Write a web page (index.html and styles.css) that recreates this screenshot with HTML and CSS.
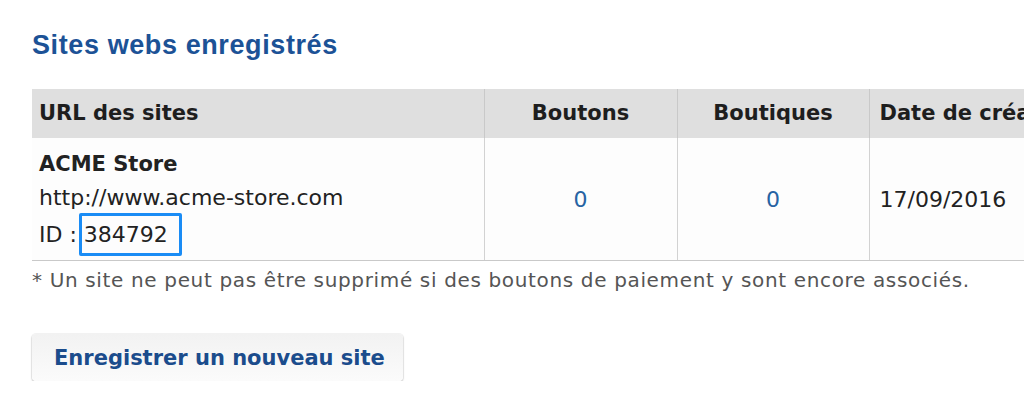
FILE: index.html
```html
<!DOCTYPE html>
<html lang="fr">
<head>
<meta charset="utf-8">
<title>Sites webs enregistrés</title>
<link rel="stylesheet" href="styles.css">
</head>
<body>
<div class="page">
  <h2 class="title">Sites webs enregistrés</h2>
  <table class="sites">
    <colgroup>
      <col class="c-url">
      <col class="c-btn">
      <col class="c-shop">
      <col class="c-date">
    </colgroup>
    <thead>
      <tr>
        <th class="h-url">URL des sites</th>
        <th class="h-num">Boutons</th>
        <th class="h-num">Boutiques</th>
        <th class="h-date">Date de création</th>
      </tr>
    </thead>
    <tbody>
      <tr>
        <td class="d-url">
          <div class="line name">ACME Store</div>
          <div class="line">http://www.acme-store.com</div>
          <div class="line idline">ID :<span class="idbox">384792</span></div>
        </td>
        <td class="d-num"><a class="count">0</a></td>
        <td class="d-num"><a class="count">0</a></td>
        <td class="d-date">17/09/2016</td>
      </tr>
    </tbody>
  </table>
  <p class="note">* Un site ne peut pas être supprimé si des boutons de paiement y sont encore associés.</p>
  <button class="btn" type="button">Enregistrer un nouveau site</button>
</div>
</body>
</html>
```
FILE: styles.css
```css
html, body {
  margin: 0;
  padding: 0;
  background: #ffffff;
  overflow: hidden;
}
body {
  font-family: "DejaVu Sans", Verdana, sans-serif;
  color: #222222;
}
.page {
  padding-left: 32px;
  width: 1200px;
}
.title {
  margin: 30px 0 0 0;
  font-family: "Liberation Sans", Arial, Helvetica, sans-serif;
  font-weight: bold;
  font-size: 27px;
  letter-spacing: 0.6px;
  line-height: 30px;
  color: #1c5296;
}
.sites {
  margin-top: 29px;
  border-collapse: collapse;
  table-layout: fixed;
  width: 1100px;
  font-size: 22px;
}
.c-url { width: 452px; }
.c-btn { width: 193px; }
.c-shop { width: 192px; }
.c-date { width: 263px; }
.sites th {
  background: #dfdfdf;
  height: 49px;
  padding: 0;
  font-weight: bold;
  font-size: 21px;
  line-height: 27px;
  color: #1e1e1e;
  border-left: 1px solid #c9c9c9;
  white-space: nowrap;
  overflow: hidden;
}
.sites th:first-child, .sites td:first-child {
  border-left: none;
}
.h-url { text-align: left; padding-left: 7px !important; }
.h-num { text-align: center; }
.h-date { text-align: left; padding-left: 10px !important; }
.sites td {
  background: #fdfdfd;
  border-left: 1px solid #d2d2d2;
  border-bottom: 1px solid #c9c9c9;
  vertical-align: middle;
  padding: 0;
}
.d-url {
  padding: 9px 0 4px 7px !important;
}
.line {
  line-height: 34px;
  white-space: nowrap;
}
.name {
  font-weight: bold;
  font-size: 21px;
}
.idline {
  display: flex;
  align-items: center;
  margin-top: -2px;
}
.idbox {
  display: inline-block;
  margin-left: 2px;
  border: 3px solid #1a8cf5;
  border-radius: 2px;
  padding: 0 11px 0 2px;
  line-height: 37px;
}
.d-num { text-align: center; }
.count {
  color: #2763a3;
  text-decoration: none;
}
.d-date {
  padding-left: 10px !important;
  white-space: nowrap;
}
.note {
  margin: 0;
  font-size: 20px;
  letter-spacing: 0.65px;
  line-height: 38px;
  color: #555555;
}
.btn {
  margin-top: 35px;
  display: block;
  width: 371px;
  height: 47px;
  padding: 0 0 0 22px;
  text-align: left;
  font-family: "DejaVu Sans", Verdana, sans-serif;
  font-weight: bold;
  font-size: 21px;
  color: #1b4c8c;
  background: linear-gradient(#f2f2f2, #fbfbfb);
  border: none;
  border-radius: 4px;
  box-shadow: 0 1px 2px rgba(0, 0, 0, 0.28), 0 0 0 1px rgba(0, 0, 0, 0.04);
}
```
